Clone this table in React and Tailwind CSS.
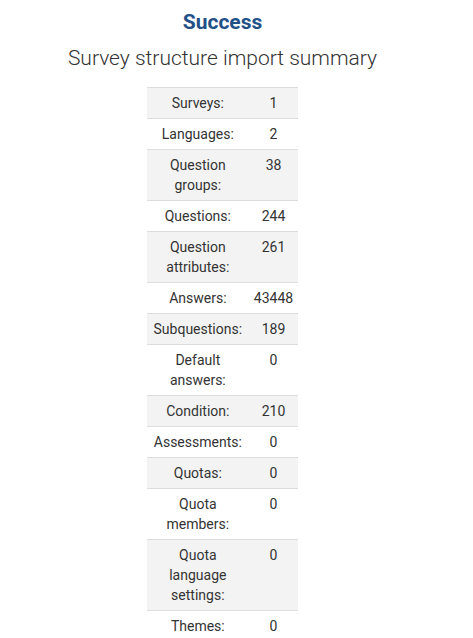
const rows = [
  ['Surveys:', '1'],
  ['Languages:', '2'],
  ['Question groups:', '38'],
  ['Questions:', '244'],
  ['Question attributes:', '261'],
  ['Answers:', '43448'],
  ['Subquestions:', '189'],
  ['Default answers:', '0'],
  ['Condition:', '210'],
  ['Assessments:', '0'],
  ['Quotas:', '0'],
  ['Quota members:', '0'],
  ['Quota language settings:', '0'],
  ['Themes:', '0'],
];

export default function App() {
  return (
    <div className="w-[445px] bg-white text-[#333] font-['Roboto',sans-serif]">
      <div className="text-center text-[21px] font-bold text-[#245088] leading-[30px] pt-[7px]">Success</div>
      <div className="text-center text-[21px] font-light leading-[30px] mt-[6px] mb-[14px]">Survey structure import summary</div>
      <table className="mx-auto border-collapse text-[14px] leading-[20px] mb-[20px]">
        <tbody>
          {rows.map(([label, value], i) => (
            <tr key={label} className={i % 2 === 0 ? 'bg-[#f3f3f3]' : 'bg-white'}>
              <td className="w-[102px] border-t border-[#dddddd] px-[5px] py-[5px] text-center align-top">{label}</td>
              <td className="w-[49px] border-t border-[#dddddd] px-[5px] py-[5px] text-center align-top">{value}</td>
            </tr>
          ))}
        </tbody>
      </table>
    </div>
  );
}
